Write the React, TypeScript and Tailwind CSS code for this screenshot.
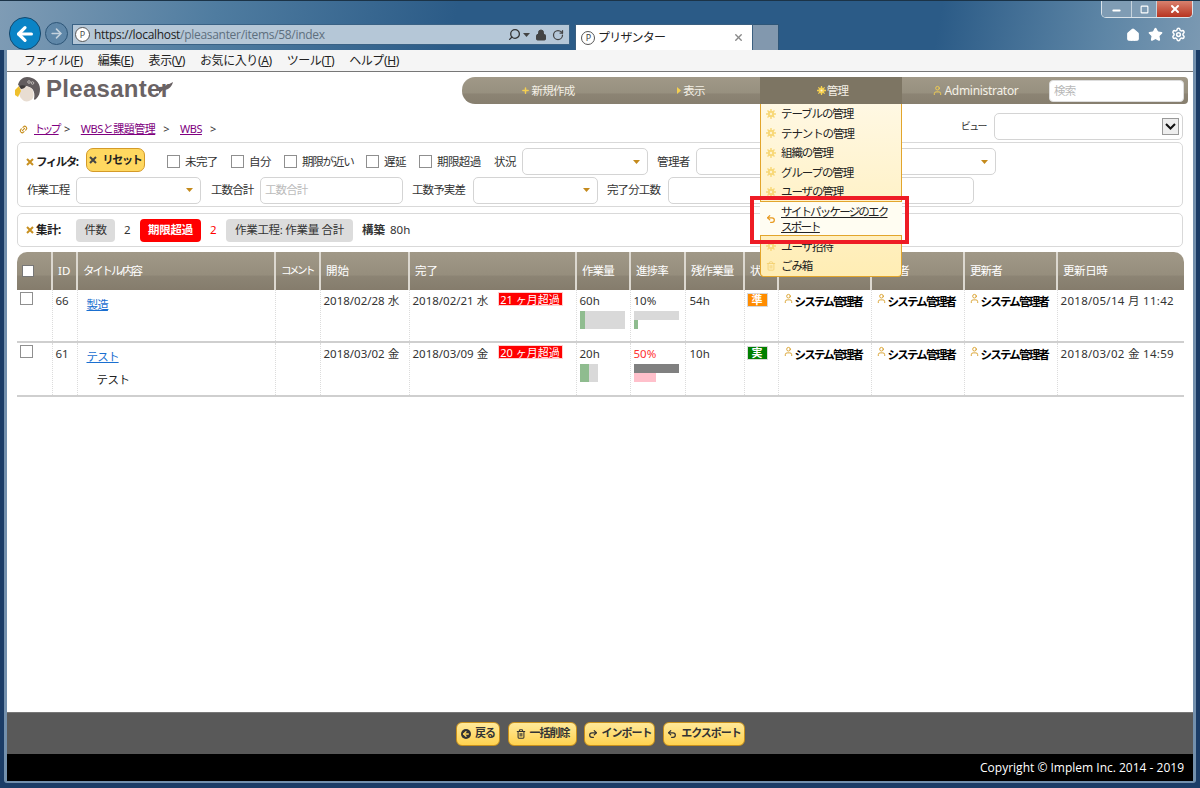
import React from "react";
import { ArrowLeft, ArrowRight, Search, Lock, RotateCw, X, Minus, Square, Home, Star, Settings, Plus, User, Undo2, Redo2, Trash2, Link2 } from "lucide-react";

const Gear = ({ c = "#f0c050", s = 10 }: { c?: string; s?: number }) => (
  <svg width={s} height={s} viewBox="0 0 10 10" className="shrink-0">
    <circle cx="5" cy="5" r="3.2" fill={c} />
    <g stroke={c} strokeWidth="1.4">
      <path d="M5 0v10M0 5h10M1.5 1.5l7 7M8.5 1.5l-7 7" />
    </g>
    <circle cx="5" cy="5" r="1.2" fill="#fff4d0" />
  </svg>
);

const XIcon = ({ c = "#c89020" }: { c?: string }) => (
  <svg width="8" height="8" viewBox="0 0 8 8" className="shrink-0">
    <path d="M1 1l6 6M7 1l-6 6" stroke={c} strokeWidth="2" />
  </svg>
);

const Caret = () => (
  <svg width="7" height="4" viewBox="0 0 7 4" className="shrink-0">
    <path d="M0 0h7L3.5 4z" fill="#c48a1c" />
  </svg>
);

const Box = ({ className = "" }: { className?: string }) => (
  <span className={`block w-[13px] h-[13px] border border-[#8f8f8f] bg-white shrink-0 ${className}`} />
);

const Check = ({ label, w, track = "tracking-[-0.6px]" }: { label: string; w: string; track?: string }) => (
  <span className={`flex items-center shrink-0 ${w}`}>
    <Box />
    <span className={`ml-[5px] whitespace-nowrap ${track}`}>{label}</span>
  </span>
);

const Sel = ({ className }: { className: string }) => (
  <span className={`h-[27px] border border-[#d4d4d4] rounded-[5px] bg-white flex items-center justify-end pr-[7px] shrink-0 ${className}`}>
    <Caret />
  </span>
);

const UserCell = () => (
  <span className="flex items-start font-bold text-[11.5px] text-black whitespace-nowrap pl-[4px] tracking-[-1.8px]">
    <User size={11} strokeWidth={2} color="#d9a02a" className="mr-[1px] shrink-0" />
    システム管理者
  </span>
);

const Bird = () => (
  <svg width="27" height="27" viewBox="0 0 27 27" className="shrink-0">
    <path d="M13 1C20 1 26 6 26 13c0 4-1 7-4 10-1 1-2 1-2 0 1-5 0-9-3-11-3-2-7-2-10-1L4 9C5 4 9 1 13 1z" fill="#625c5e" />
    <path d="M6 11c4-2 8-1 11 1 3 3 3 7 2 10-2 3-6 4-9 3-3-2-5-5-5-9 0-2 0-4 1-5z" fill="#e8ddd2" />
    <path d="M5 10L1 14l0 5 3 2 3-6z" fill="#efc02c" />
    <path d="M5 10c2-1 5-1 7 0-1 2-3 3-5 3z" fill="#3d393a" />
    <circle cx="15" cy="6" r="1.3" fill="none" stroke="#d8d4d0" strokeWidth="0.7" />
    <circle cx="18.5" cy="7" r="1.3" fill="none" stroke="#d8d4d0" strokeWidth="0.7" />
  </svg>
);

const Btn = ({ icon, label, w, ml }: { icon: React.ReactNode; label: string; w: string; ml: string }) => (
  <span className={`h-[24px] ${w} ${ml} rounded-[6px] border border-[#c8901c] bg-[linear-gradient(#ffe99a,#ffd24f)] flex items-center justify-center gap-[4px] font-bold text-[11px] text-[#333] whitespace-nowrap tracking-[-1px]`}>
    {icon}
    {label}
  </span>
);

const cols = [35, 25, 198, 45, 89, 167, 54, 55, 59, 34, 93, 93, 93, 127];
const heads: [string, string][] = [
  ["", ""],
  ["ID", ""],
  ["タイトル/内容", "tracking-[-2.2px]"],
  ["コメント", "text-[10.5px] tracking-[-2.5px]"],
  ["開始", ""],
  ["完了", ""],
  ["作業量", "tracking-[-0.9px]"],
  ["進捗率", "tracking-[-0.9px]"],
  ["残作業量", "tracking-[-0.9px]"],
  ["状況", ""],
  ["管理者", "tracking-[-0.9px]"],
  ["担当者", "tracking-[-0.9px]"],
  ["更新者", "tracking-[-0.9px]"],
  ["更新日時", "tracking-[-0.4px]"],
];

const td = "align-top border-r border-dotted border-[#dcdcdc] p-0 last:border-r-0";

type R = {
  id: string; title: string; body?: string; start: string; end: string; over: string; h: string;
  work: string; grey: string; green: string; prog: string; progRed?: boolean; rem: string; st: string; stc: string; upd: string;
};

const Row = ({ r }: { r: R }) => (
  <tr className={`border-b-2 border-[#cfcfcf] text-[#333] ${r.h}`}>
    <td className={td}><div className="pl-[3px] pt-[2px]"><Box /></div></td>
    <td className={td}><div className="pl-[3px] pt-[2px]">{r.id}</div></td>
    <td className={td}>
      <div className={`pl-[9px] ${r.body ? "pt-[5px]" : "pt-[6px]"}`}>
        <span className="text-[#1a6fd0] underline tracking-[-0.8px]">{r.title}</span>
        {r.body && <div className="pl-[10px] pt-[6px] text-[#222] tracking-[-0.5px]">{r.body}</div>}
      </div>
    </td>
    <td className={td} />
    <td className={td}><div className="pl-[3px] pt-[2px] whitespace-nowrap">{r.start}</div></td>
    <td className={td}>
      <div className="pl-[3px] pt-[2px] flex whitespace-nowrap">
        <span className="w-[85px]">{r.end}</span>
        <span className="h-[14px] w-[65px] bg-[#ff0000] text-white text-center leading-[13px] text-[11px] border border-[#ffd0d0]">{r.over}</span>
      </div>
    </td>
    <td className={td}>
      <div className="pl-[3px] pt-[2px]">{r.work}</div>
      <div className={`ml-[3px] mt-[2px] h-[18px] bg-[#d9d9d9] ${r.grey}`}>
        <div className={`h-full bg-[#8fbc8f] ${r.green}`} />
      </div>
    </td>
    <td className={td}>
      <div className={`pl-[3px] pt-[2px] ${r.progRed ? "text-[#ff3030]" : ""}`}>{r.prog}</div>
      <div className={`ml-[3px] mt-[2px] h-[9px] w-[45px] ${r.progRed ? "bg-[#808080]" : "bg-[#d9d9d9]"}`} />
      <div className={`ml-[3px] h-[9px] ${r.progRed ? "w-[22px] bg-[#ffc0cb]" : "w-[4px] bg-[#8fbc8f]"}`} />
    </td>
    <td className={td}><div className="pl-[4px] pt-[2px]">{r.rem}</div></td>
    <td className={td}>
      <div className={`ml-[2px] mt-[3px] w-[21px] h-[14px] flex items-center justify-center text-white font-bold text-[11px] border border-[#d8d8d8] ${r.stc}`}>{r.st}</div>
    </td>
    <td className={td}><div className="pt-[3px]"><UserCell /></div></td>
    <td className={td}><div className="pt-[3px]"><UserCell /></div></td>
    <td className={td}><div className="pt-[3px]"><UserCell /></div></td>
    <td className={td}><div className="pl-[3px] pt-[2px] whitespace-nowrap tracking-[0.3px]">{r.upd}</div></td>
  </tr>
);

const rows: R[] = [
  { id: "66", h: "h-[52px]", title: "製造", start: "2018/02/28 水", end: "2018/02/21 水", over: "21 ヶ月超過", work: "60h", grey: "w-[45px]", green: "w-[5px]", prog: "10%", rem: "54h", st: "準", stc: "bg-[#ff8c00]", upd: "2018/05/14 月 11:42" },
  { id: "61", h: "h-[54px]", title: "テスト", body: "テスト", start: "2018/03/02 金", end: "2018/03/09 金", over: "20 ヶ月超過", work: "20h", grey: "w-[18px]", green: "w-[9px]", prog: "50%", progRed: true, rem: "10h", st: "実", stc: "bg-[#008000]", upd: "2018/03/02 金 14:59" },
];

const menuTop = ["テーブルの管理", "テナントの管理", "組織の管理", "グループの管理", "ユーザの管理"];

export default function App() {
  return (
    <div className="w-[1200px] h-[788px] overflow-hidden flex flex-col bg-[#1b3c66] font-['Noto_Sans','Noto_Sans_CJK_JP',sans-serif] text-[11.5px] text-[#333]">
      {/* browser chrome */}
      <div className="h-[50px] flex items-end pl-[9px] pr-[7px] relative shrink-0 border-t border-[#1b3347] bg-[linear-gradient(100deg,#7f9cb5_0%,#4f7ca0_18%,#2b5b87_38%,#2b5b87_78%,#5e86a6_92%,#7b99b2_100%)]">
        <span className="w-[32px] h-[33px] rounded-full bg-[#0a84c6] border border-[#16496e] flex items-center justify-center">
          <ArrowLeft size={22} strokeWidth={3.5} color="#fff" />
        </span>
        <span className="w-[23px] h-[23px] rounded-full bg-[#5f87a8] border border-[#2e5678] flex items-center justify-center ml-[4px] mb-[5px]">
          <ArrowRight size={15} strokeWidth={2.5} color="#c4d2de" />
        </span>
        <div className="w-[498px] h-[21px] ml-[4px] mb-[5px] bg-[#b5c7d7] border border-[#3a6285] flex items-center pl-[2px] pr-[5px] text-[12px] font-['Open_Sans','Noto_Sans',sans-serif]">
          <span className="w-[15px] h-[15px] rounded-full border border-[#555] bg-white text-[9px] leading-[13px] text-center text-[#444] shrink-0">P</span>
          <span className="ml-[4px] text-[#222] whitespace-nowrap tracking-[-0.3px]">https://<span className="text-[#222]">localhost</span><span className="text-[#5e6f7e]">/pleasanter/items/58/index</span></span>
          <span className="ml-auto flex items-center gap-[2px]">
            <Search size={13} color="#333" strokeWidth={2.4} className="-scale-x-100" />
            <svg width="7" height="4" viewBox="0 0 7 4"><path d="M0 0h7L3.5 4z" fill="#444" /></svg>
            <Lock size={12} color="#444" fill="#444" className="ml-[3px]" />
            <RotateCw size={12} color="#444" strokeWidth={2.5} className="ml-[3px]" />
          </span>
        </div>
        <div className="w-[178px] h-[26px] ml-[5px] bg-white border-x border-t border-[#3a5f80] flex items-center pl-[5px] pr-[8px] text-[12px] text-[#222] tracking-[-0.8px]">
          <span className="w-[14px] h-[14px] rounded-full border border-[#555] bg-white text-[9px] leading-[12px] text-center text-[#444] shrink-0">P</span>
          <span className="ml-[3px]">プリザンター</span>
          <X size={11} color="#888" strokeWidth={3} className="ml-auto" />
        </div>
        <div className="w-[26px] h-[26px] bg-[#8298ae] border-r border-t border-[#2e5678]" />
        <div className="ml-auto flex items-center gap-[8px] mb-[8px] mr-[7px]">
          <Home size={14} color="#fff" fill="#fff" />
          <Star size={15} color="#fff" fill="#fff" />
          <Settings size={15} color="#fff" strokeWidth={2.4} />
        </div>
        <div className="absolute top-0 right-[7px] w-[92px] h-[17px] flex rounded-b-[5px] overflow-hidden border border-t-0 border-[#d9e3ea]">
          <span className="w-[29px] bg-[#7f9cb4] flex items-end justify-center pb-[1px]"><Minus size={11} color="#fff" strokeWidth={4} /></span>
          <span className="w-[26px] bg-[#7f9cb4] border-x border-[#c7d4de] flex items-center justify-center"><Square size={9} color="#fff" strokeWidth={3} /></span>
          <span className="flex-1 bg-[linear-gradient(#d9826f,#b83420)] flex items-center justify-center"><X size={12} color="#fff" strokeWidth={4} /></span>
        </div>
      </div>

      {/* content window */}
      <div className="flex-1 flex flex-col mx-[4px] border-x-[3px] border-b-[2px] border-[#7390ad] rounded-b-[3px] bg-white min-h-0">
        <div className="h-[22px] bg-[#f5f5f5] border-b border-[#777] flex items-center pl-[17px] text-[12px] text-[#222] shrink-0 gap-[15px] whitespace-nowrap tracking-[-0.4px]">
          {[["ファイル", "F"], ["編集", "E"], ["表示", "V"], ["お気に入り", "A"], ["ツール", "T"], ["ヘルプ", "H"]].map(([a, b]) => (
            <span key={a}>{a}(<span className="underline">{b}</span>)</span>
          ))}
        </div>

        <div className="flex-1 min-h-0 flex flex-col px-[10px] relative">
          {/* header */}
          <div className="flex items-start pt-[5px] h-[37px] shrink-0">
            <div className="flex items-center -ml-[3px] -mt-[2px]">
              <Bird />
              <span className="relative ml-[5px] font-['Liberation_Sans',sans-serif] font-bold text-[24px] leading-[28px] text-[#6a6365] tracking-[0.3px]">
                Pleasanter
                <svg width="14" height="13" viewBox="0 0 14 13" className="absolute right-[-3px] top-[6px]">
                  <path d="M0 13V6C4 6 9 4 14 1c-1 4-4 8-9 8-2 0-3 2-5 4z" fill="#6a6365" />
                </svg>
              </span>
            </div>
            <nav className="ml-auto -mr-[5px] w-[726px] h-[27px] rounded-l-[13px] rounded-r-[4px] bg-[linear-gradient(#a09887,#97907f_60%,#8c8474_62%,#877f6f)] flex items-center text-[#f4f0e6] text-[11.5px] tracking-[-0.7px] relative z-20">
              <span className="w-[172px] flex items-center justify-center gap-[1px]"><Plus size={9} color="#f5d050" strokeWidth={4} />新規作成</span>
              <span className="w-[126px] flex items-center justify-center gap-[2px] pr-[12px]">
                <svg width="4" height="7" viewBox="0 0 4 7"><path d="M0 0l4 3.5L0 7z" fill="#f5d050" /></svg>表示
              </span>
              <div className="relative w-[142px] h-[27px] bg-[#7d7563] flex items-center justify-center gap-[1px] pl-[3px]">
                <Gear s={9} c="#f5d050" />管理
                <div className="absolute top-[27px] left-0 w-[142px] h-[173px] border border-t-0 border-[#e2a52c] rounded-b-[4px] bg-[linear-gradient(#fff8e3,#ffedb4)] text-[#222] text-[11.5px] tracking-[-1.1px] z-30 flex flex-col">
                  {menuTop.map((m) => (
                    <div key={m} className="h-[19.6px] flex items-center pl-[5px] gap-[5px] whitespace-nowrap"><Gear c="#f8d878" />{m}</div>
                  ))}
                  <div className="relative h-[35px] -mx-[1px] border-y border-[#e2a52c] bg-[#fffdf2] flex items-center pl-[6px] gap-[5px]">
                    <Undo2 size={10} color="#e89a20" strokeWidth={3} className="shrink-0" />
                    <span className="underline leading-[15px] whitespace-nowrap tracking-[-1.8px]">サイトパッケージのエク<br />スポート</span>
                    <div className="absolute -left-[10px] -right-[7px] -top-[6px] -bottom-[9px] border-[4px] border-[#ee1c25]" />
                  </div>
                  <div className="h-[20px] flex items-center pl-[5px] gap-[5px] whitespace-nowrap"><Gear c="#f8d878" />ユーザ招待</div>
                  <div className="h-[20px] flex items-center pl-[5px] gap-[5px] whitespace-nowrap"><Trash2 size={10} color="#f3d070" className="shrink-0" />ごみ箱</div>
                </div>
              </div>
              <span className="w-[147px] flex items-center justify-center gap-[1px] text-[12px] tracking-[-0.3px] whitespace-nowrap"><User size={11} color="#f5d050" />Administrator</span>
              <span className="w-[135px] h-[22px] bg-white rounded-[4px] border border-[#ddd] text-[#b8b8b8] flex items-center pl-[4px]">検索</span>
            </nav>
          </div>

          {/* breadcrumb */}
          <div className="h-[28px] flex items-start shrink-0 pt-[4px] relative">
            <div className="flex items-center pl-[2px] pt-[8px] text-[#333] text-[11px] whitespace-nowrap tracking-[-0.5px]">
              <Link2 size={9} color="#c89020" strokeWidth={3} className="-rotate-45 mr-[6px]" />
              <span className="text-[#800080] underline tracking-[-2.8px] w-[23px]">トップ</span>
              <span className="ml-[7px] mr-[11px]">&gt;</span>
              <span className="text-[#800080] underline">WBSと課題管理</span>
              <span className="ml-[8px] mr-[11px]">&gt;</span>
              <span className="text-[#800080] underline">WBS</span>
              <span className="ml-[8px]">&gt;</span>
            </div>
            <div className="ml-auto flex items-center">
              <span className="text-[10px] mr-[8px] tracking-[-1.6px]">ビュー</span>
              <span className="w-[189px] h-[27px] border border-[#d4d4d4] rounded-[5px] bg-white flex items-center justify-end pr-[3px]">
                <span className="w-[17px] h-[17px] border border-[#999] bg-[#eee] flex items-center justify-center">
                  <svg width="11" height="7" viewBox="0 0 11 7"><path d="M1 1l4.5 4.5L10 1" fill="none" stroke="#111" strokeWidth="2" /></svg>
                </span>
              </span>
            </div>
          </div>

          {/* filter */}
          <div className="h-[65px] mt-[5px] shrink-0 border border-[#d9d9d9] rounded-[5px] pl-[8px] pt-[5px] text-[#333]">
            <div className="h-[27px] flex items-center whitespace-nowrap">
              <XIcon />
              <span className="ml-[2px] font-bold text-[#222] w-[50px] tracking-[-1.5px]">フィルタ:</span>
              <span className="w-[59px] h-[24px] -mt-[3px] rounded-[7px] border border-[#d49a28] bg-[#ffd860] flex items-center justify-center gap-[5px] font-bold text-[#222] text-[11px] tracking-[-1.2px]">
                <XIcon c="#444" />リセット
              </span>
              <span className="w-[22px]" />
              <Check label="未完了" w="w-[64px]" />
              <Check label="自分" w="w-[53px]" />
              <Check label="期限が近い" w="w-[82px]" track="tracking-[-1.2px]" />
              <Check label="遅延" w="w-[53px]" />
              <Check label="期限超過" w="w-[75px]" />
              <span className="w-[22px] tracking-[-0.6px]">状況</span>
              <Sel className="w-[126px] ml-[6px]" />
              <span className="ml-[9px] w-[32px] tracking-[-0.6px]">管理者</span>
              <Sel className="w-[300px] ml-[7px]" />
            </div>
            <div className="h-[28px] flex items-center whitespace-nowrap pl-[1px] mt-[1px] tracking-[-0.9px]">
              <span className="w-[49px]">作業工程</span>
              <Sel className="w-[125px]" />
              <span className="ml-[10px] w-[49px]">工数合計</span>
              <span className="w-[143px] h-[27px] border border-[#d4d4d4] rounded-[5px] text-[#bbb] flex items-center pl-[4px]">工数合計</span>
              <span className="ml-[9px] w-[61px]">工数予実差</span>
              <Sel className="w-[125px]" />
              <span className="ml-[9px] w-[61px]">完了分工数</span>
              <span className="w-[306px] h-[27px] border border-[#d4d4d4] rounded-[5px]" />
            </div>
          </div>

          {/* aggregation */}
          <div className="h-[34px] mt-[6px] shrink-0 border border-[#d9d9d9] rounded-[5px] pl-[8px] flex items-center whitespace-nowrap">
            <XIcon />
            <span className="ml-[2px] font-bold text-[#222] w-[40px] tracking-[-0.5px]">集計:</span>
            <span className="w-[39px] h-[23px] bg-[#dcdcdc] rounded-[4px] flex items-center justify-center tracking-[-0.5px]">件数</span>
            <span className="ml-[9px] w-[16px]">2</span>
            <span className="w-[61px] h-[23px] bg-[#ff0000] rounded-[4px] text-white font-bold flex items-center justify-center tracking-[-0.3px]">期限超過</span>
            <span className="ml-[9px] w-[16px] text-[#ff0000]">2</span>
            <span className="w-[127px] h-[23px] bg-[#dcdcdc] rounded-[4px] flex items-center justify-center tracking-[-0.3px]">作業工程: 作業量 合計</span>
            <span className="ml-[9px] font-bold">構築</span>
            <span className="ml-[5px]">80h</span>
          </div>

          {/* table */}
          <table className="mt-[5px] w-[1167px] table-fixed border-collapse shrink-0">
            <colgroup>
              {cols.map((c, i) => <col key={i} style={{ width: c }} />)}
            </colgroup>
            <thead>
              <tr className="h-[38px] bg-[linear-gradient(#a09887,#968e7d_60%,#8c8474_64%,#857c6c)] text-white text-[11.5px]">
                {heads.map(([h, t], i) => (
                  <th key={i} className={`font-normal text-left pl-[5px] pr-0 whitespace-nowrap overflow-hidden border-r-2 border-[#dcd8d0] last:border-r-0 ${t} ${i === 0 ? "rounded-tl-[10px]" : ""} ${i === 13 ? "rounded-tr-[10px]" : ""}`}>
                    {i === 0 ? <span className="block w-[12px] h-[12px] bg-white border border-[#777]" /> : h}
                  </th>
                ))}
              </tr>
            </thead>
            <tbody>
              {rows.map((r) => <Row key={r.id} r={r} />)}
            </tbody>
          </table>
        </div>

        {/* footer */}
        <div className="h-[42px] shrink-0 bg-[#595959] border-t border-[#777] flex items-center pl-[449px]">
          <Btn w="w-[44px]" ml="" label="戻る" icon={<span className="w-[10px] h-[10px] rounded-full bg-[#333] flex items-center justify-center"><ArrowLeft size={8} color="#ffd860" strokeWidth={4} /></span>} />
          <Btn w="w-[69px]" ml="ml-[8px]" label="一括削除" icon={<Trash2 size={10} color="#333" strokeWidth={2.5} />} />
          <Btn w="w-[71px]" ml="ml-[7px]" label="インポート" icon={<Redo2 size={10} color="#333" strokeWidth={3} />} />
          <Btn w="w-[82px]" ml="ml-[8px]" label="エクスポート" icon={<Undo2 size={10} color="#333" strokeWidth={3} />} />
        </div>
        <div className="h-[27px] shrink-0 bg-black text-white text-[12px] flex items-center justify-end pr-[9px] font-['Open_Sans',sans-serif]">
          Copyright © Implem Inc. 2014 - 2019
        </div>
      </div>
      <div className="h-[5px] shrink-0" />
    </div>
  );
}
